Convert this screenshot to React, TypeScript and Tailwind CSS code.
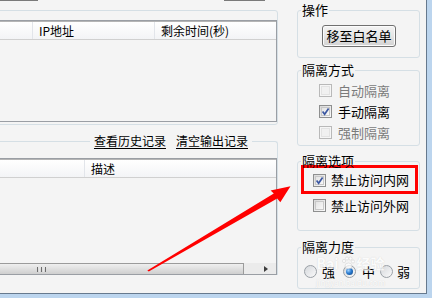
import React from "react";

function CheckBox({ checked = false, disabled = false }: { checked?: boolean; disabled?: boolean }) {
  return (
    <span
      className={
        disabled
          ? "flex h-[13px] w-[13px] shrink-0 items-center justify-center border border-[#b9b9b9] bg-[#f6f6f6]"
          : "flex h-[13px] w-[13px] shrink-0 items-center justify-center border border-[#8e8f8f] bg-gradient-to-br from-[#d9d9d9] to-[#fbfbfb]"
      }
    >
      <span
        className={
          disabled
            ? "block h-[9px] w-[9px] border border-[#e3e3e3] bg-[#f1f1f1]"
            : "flex h-[9px] w-[9px] items-center justify-center border border-[#c8c8c8] bg-gradient-to-br from-[#e4e4e4] to-[#f8f8f8]"
        }
      >
        {checked && (
          <svg width="9" height="9" viewBox="0 0 9 9" className="-m-px">
            <path d="M1.6 4.6 L3.6 7.2 L7.6 1.4" fill="none" stroke="#3c58a2" strokeWidth="1.7" />
          </svg>
        )}
      </span>
    </span>
  );
}

function Radio({ checked = false }: { checked?: boolean }) {
  return (
    <span className="flex h-[13px] w-[13px] shrink-0 items-center justify-center rounded-full border border-[#9aa0a6] bg-gradient-to-br from-[#d5d8dc] to-[#fafafa]">
      {checked && (
        <span className="block h-[7px] w-[7px] rounded-full bg-[radial-gradient(circle_at_35%_35%,#9fd3ff_0%,#2a7bd0_45%,#0d3f7a_100%)]" />
      )}
    </span>
  );
}

function HeaderCell({ w, children, last = false }: { w?: string; children?: React.ReactNode; last?: boolean }) {
  return (
    <div
      className={
        last
          ? "flex h-full flex-1 items-center pl-[6px] leading-[17px]"
          : `flex h-full shrink-0 items-center border-r border-[#e2e5ea] pl-[6px] leading-[17px] ${w}`
      }
    >
      {children}
    </div>
  );
}

export default function App() {
  return (
    <div className="h-[298px] w-[432px] overflow-hidden bg-[#bcd5ee] font-['Noto_Sans_CJK_SC',sans-serif] text-[12px] text-black">
      <div className="relative flex h-[294px] w-[427px] border-r border-b border-[#66798e] bg-[#f4f4f4]">
        {/* left column */}
        <div className="flex w-[278px] shrink-0 flex-col">
          <div className="flex h-px">
            <div className="w-[38px] bg-[#7a7a7a]" />
            <div className="ml-[186px] w-[41px] bg-[#7a7a7a]" />
          </div>

          <div className="-ml-[6px] mt-[9px] h-[115px] w-[284px] rounded-[3px] border border-[#d5dfe5] pl-[3px] pt-[9px]">
            <div className="flex h-[102px] w-[279px] flex-col border border-[#9a9ea4]">
              <div className="flex h-[19px] border-t border-b border-t-[#b5b5b5] border-b-[#d0d0d0] bg-gradient-to-b from-white to-[#f3f4f6]">
                <HeaderCell w="w-[34px]" />
                <HeaderCell w="w-[122px]">IP地址</HeaderCell>
                <HeaderCell last>剩余时间(秒)</HeaderCell>
              </div>
              <div className="flex-1" />
            </div>
          </div>

          <fieldset className="-ml-[6px] mt-[9px] h-[141px] w-[284px] rounded-t-[3px] border border-b-0 border-[#d5dfe5]">
            <legend className="ml-auto mr-[25px] flex h-[14px] items-center gap-[10px] px-[4px] leading-[14px]">
              <span className="underline underline-offset-2">查看历史记录</span>
              <span className="underline underline-offset-2">清空输出记录</span>
            </legend>
            <div className="pl-[3px] pt-[10px]">
              <div className="flex h-[117px] w-[279px] flex-col border border-[#9a9ea4]">
                <div className="flex h-[19px] shrink-0 border-t border-b border-t-[#b5b5b5] border-b-[#d0d0d0] bg-gradient-to-b from-white to-[#f3f4f6]">
                  <HeaderCell w="w-[86px]" />
                  <HeaderCell last>描述</HeaderCell>
                </div>
                <div className="flex-1" />
                <div className="flex h-[11px] shrink-0">
                  <div className="flex w-[245px] items-center border-t border-r border-[#9b9b9b] bg-gradient-to-b from-[#efefef] to-[#cfcfcf] pl-[38px]">
                    <div className="flex h-[5px] gap-[1px]">
                      <span className="w-px bg-[#6d6d6d]" />
                      <span className="w-px bg-[#e6e6e6]" />
                      <span className="w-px bg-[#6d6d6d]" />
                      <span className="w-px bg-[#e6e6e6]" />
                      <span className="w-px bg-[#6d6d6d]" />
                    </div>
                  </div>
                  <div className="flex flex-1 items-center justify-end bg-[#ebebeb] pr-[8px]">
                    <svg width="4" height="6" viewBox="0 0 4 6">
                      <path d="M0 0 L4 3 L0 6 Z" fill="#3d3d3d" />
                    </svg>
                  </div>
                </div>
              </div>
            </div>
          </fieldset>
        </div>

        {/* right column */}
        <div className="ml-[19px] flex w-[123px] shrink-0 flex-col text-[13px]">
          <fieldset className="mt-[3px] h-[55px] rounded-[3px] border border-[#d5dfe5]">
            <legend className="ml-[3px] h-[14px] px-[1px] leading-[14px]">操作</legend>
            <div className="pl-[24px] pt-[8px]">
              <button className="flex h-[22px] w-[74px] items-center justify-center rounded-[3px] border border-[#707070] bg-gradient-to-b from-[#f4f4f4] via-[#e6e6e6] to-[#d2d2d2] leading-[20px] shadow-[inset_0_0_0_1px_#fcfcfc]">
                移至白名单
              </button>
            </div>
          </fieldset>

          <fieldset className="mt-[5px] h-[83px] rounded-[3px] border border-[#d5dfe5]">
            <legend className="ml-[3px] h-[14px] px-[1px] leading-[14px]">隔离方式</legend>
            <div className="pl-[21px] pt-[3px]">
              <div className="flex h-[21px] items-center gap-[6px]">
                <CheckBox disabled />
                <span className="leading-[14px] text-[#7b7b7b]">自动隔离</span>
              </div>
              <div className="flex h-[21px] items-center gap-[6px]">
                <CheckBox checked />
                <span className="leading-[14px]">手动隔离</span>
              </div>
              <div className="flex h-[21px] items-center gap-[6px]">
                <CheckBox disabled />
                <span className="leading-[14px] text-[#7b7b7b]">强制隔离</span>
              </div>
            </div>
          </fieldset>

          <fieldset className="mt-[8px] h-[77px] rounded-[3px] border border-[#d5dfe5]">
            <legend className="ml-[3px] h-[14px] px-[1px] leading-[14px]">隔离选项</legend>
            <div className="-mt-[3px] ml-[3px] h-[29px] w-[117px] border-[3px] border-[#ff0000] pl-[9px] pt-[5px]">
              <div className="flex items-center gap-[5px]">
                <CheckBox checked />
                <span className="leading-[14px]">禁止访问内网</span>
              </div>
            </div>
            <div className="flex h-[23px] items-center gap-[5px] pl-[15px]">
              <CheckBox />
              <span className="leading-[14px]">禁止访问外网</span>
            </div>
          </fieldset>

          <fieldset className="mt-[9px] h-[49px] rounded-[3px] border border-[#d5dfe5]">
            <legend className="ml-[3px] h-[14px] px-[1px] leading-[14px]">隔离力度</legend>
            <div className="mt-[8px] flex h-[19px] items-center pl-[6px]">
              <Radio />
              <span className="ml-[5px] leading-[14px]">强</span>
              <span className="ml-[8px]">
                <Radio checked />
              </span>
              <span className="ml-[6px] leading-[14px]">中</span>
              <span className="ml-[5px]">
                <Radio />
              </span>
              <span className="ml-[4px] leading-[14px]">弱</span>
            </div>
          </fieldset>
        </div>

        {/* faint watermark */}
        <div className="pointer-events-none absolute left-[316px] top-[256px] flex flex-col items-center opacity-70">
          <div className="flex items-start gap-[2px] text-[14px] font-bold leading-[14px] text-white [text-shadow:0_0_1px_#c4c4c4]">
            <span>Bai</span>
            <svg width="14" height="14" viewBox="0 0 14 14">
              <circle cx="3" cy="5" r="1.6" fill="#fff" stroke="#c8c8c8" strokeWidth="0.6" />
              <circle cx="6" cy="2.5" r="1.6" fill="#fff" stroke="#c8c8c8" strokeWidth="0.6" />
              <circle cx="9.5" cy="2.5" r="1.6" fill="#fff" stroke="#c8c8c8" strokeWidth="0.6" />
              <circle cx="12" cy="5.5" r="1.6" fill="#fff" stroke="#c8c8c8" strokeWidth="0.6" />
              <ellipse cx="7.5" cy="10" rx="3.5" ry="3" fill="#fff" stroke="#c8c8c8" strokeWidth="0.6" />
            </svg>
            <span>经验</span>
          </div>
          <span className="mt-[8px] text-[8px] leading-[9px] text-white [text-shadow:0_0_1px_#c0c0c0]">jingyan.baidu.com</span>
        </div>

        {/* red arrow */}
        <svg className="pointer-events-none absolute left-0 top-0" width="432" height="298" viewBox="0 0 432 298">
          <polygon
            points="147.3,270.6 273.8,193.6 270.6,190.6 290.5,186.2 280.3,202.3 277.2,198.4 148.8,271.4"
            fill="#ff0000"
          />
        </svg>
      </div>
    </div>
  );
}
